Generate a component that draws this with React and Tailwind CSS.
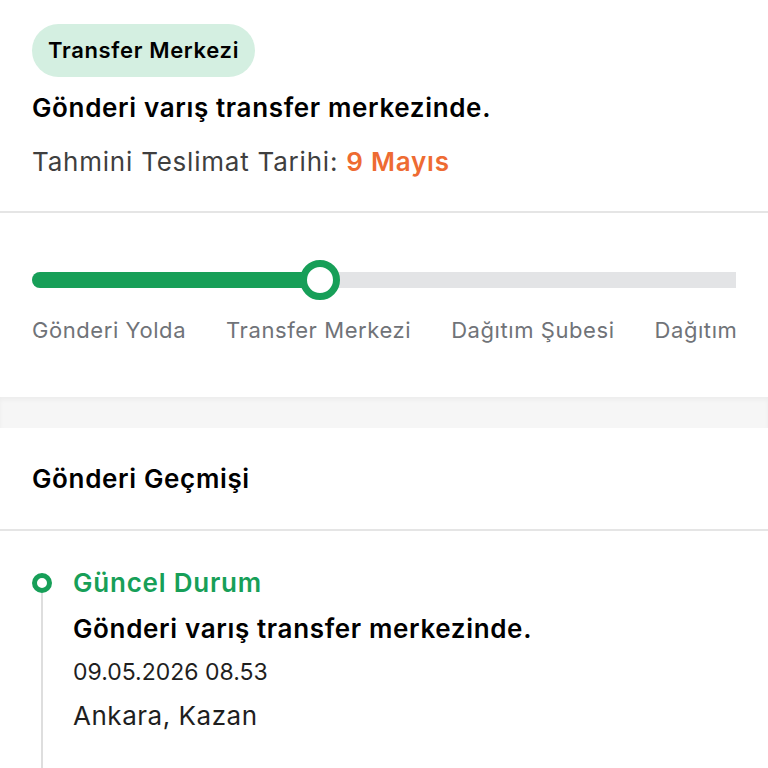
import React from 'react';

const steps = ['Gönderi Yolda', 'Transfer Merkezi', 'Dağıtım Şubesi', 'Dağıtımda', 'Teslim Edildi'];

const App = () => {
  return (
    <div className="min-h-screen bg-white text-black" style={{ fontFamily: 'Inter, "Noto Sans", sans-serif' }}>
      {/* Ozet */}
      <div className="px-8 pt-6 pb-[34px] border-b-2 border-[#e5e5e5]">
        <div className="inline-flex items-center h-[53px] px-4 rounded-full bg-[#d4efe1] text-[22px] font-semibold tracking-[0.03em]">
          Transfer Merkezi
        </div>
        <div className="mt-[16px] text-[26px] font-semibold leading-[30px] tracking-[0.025em]">Gönderi varış transfer merkezinde.</div>
        <div className="mt-[24px] text-[26px] leading-[30px] tracking-[0.03em] text-[#3f3f3f]">
          Tahmini Teslimat Tarihi: <span className="text-[#ee6b32] font-semibold">9 Mayıs</span>
        </div>
      </div>

      {/* Ilerleme */}
      <div className="px-8 pt-[47px] pb-[50px]">
        <div className="overflow-hidden">
          <div className="relative h-10 flex items-center">
            <div className="w-full h-4 bg-[#e3e4e6] rounded-l-full" />
            <div className="absolute left-0 top-3 h-4 w-[288px] bg-[#179f58] rounded-full" />
            <div className="absolute left-[268px] top-0 w-10 h-10 rounded-full border-[7px] border-[#179f58] bg-white" />
          </div>
          <div className="mt-[14px] flex gap-[40px] whitespace-nowrap text-[22px] tracking-[0.026em] text-[#707378]">
            {steps.map((s) => (
              <span key={s}>{s}</span>
            ))}
          </div>
        </div>
      </div>

      <div className="h-[31px] bg-[#f6f6f6] shadow-[inset_0_3px_4px_rgba(0,0,0,0.04)]" />

      {/* Gecmis */}
      <div className="px-8 pt-[36px] pb-[35px] border-b-2 border-[#e5e5e5] text-[26px] leading-[30px] font-semibold tracking-[0.025em]">
        Gönderi Geçmişi
      </div>

      <div className="px-8 pt-[37px]">
        <div className="flex gap-[21px]">
          <div className="flex flex-col items-center w-5">
            <div className="mt-[5px] w-5 h-5 rounded-full border-[5px] border-[#179f58]" />
            <div className="w-[2px] h-[200px] bg-[#dedede]" />
          </div>
          <div className="flex flex-col">
            <div className="text-[26px] font-semibold tracking-[0.03em] text-[#179f58] leading-[30px]">Güncel Durum</div>
            <div className="mt-[16px] text-[26px] font-semibold tracking-[0.025em] leading-[30px]">Gönderi varış transfer merkezinde.</div>
            <div className="mt-[13px] text-[23px] leading-[30px] text-[#1f1f1f]">09.05.2026 08.53</div>
            <div className="mt-[14px] text-[26px] tracking-[0.02em] leading-[30px] text-[#1f1f1f]">Ankara, Kazan</div>
          </div>
        </div>
      </div>
    </div>
  );
};

export default App;
